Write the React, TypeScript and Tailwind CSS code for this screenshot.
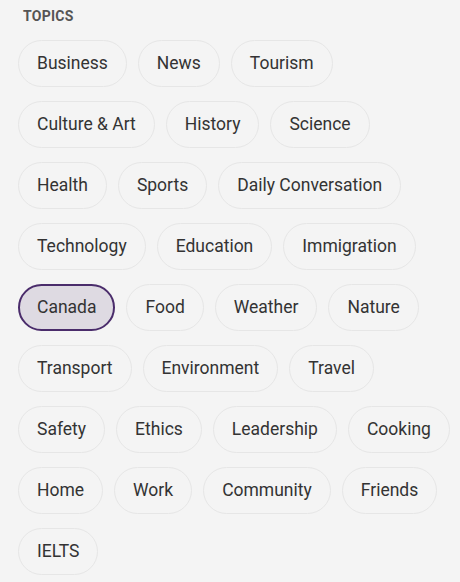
import React from 'react';

const TOPICS = [
  'Business', 'News', 'Tourism', 'Culture & Art', 'History', 'Science',
  'Health', 'Sports', 'Daily Conversation', 'Technology', 'Education', 'Immigration',
  'Canada', 'Food', 'Weather', 'Nature', 'Transport', 'Environment', 'Travel',
  'Safety', 'Ethics', 'Leadership', 'Cooking', 'Home', 'Work', 'Community', 'Friends', 'IELTS',
];

export default function App() {
  const selected = 'Canada';

  return (
    <div
      className="min-h-[582px] w-[460px] bg-[#f4f4f4] pl-[18px] pr-[8px] pt-[8px]"
      style={{ fontFamily: 'Roboto, "Noto Sans", sans-serif' }}
    >
      <h3 className="pl-[5px] text-[14px] font-bold tracking-[0.02em] text-[#555] leading-[16px]">TOPICS</h3>
      <div className="mt-[16px] flex flex-wrap gap-x-[11px] gap-y-[14px]">
        {TOPICS.map((topic) => {
          const active = topic === selected;
          return (
            <button
              key={topic}
              className={
                active
                  ? 'h-[47px] rounded-full border-2 border-[#4a2c6b] bg-[#dedae2] px-[17px] text-[17.5px] text-[#333]'
                  : 'h-[47px] rounded-full border-[1.5px] border-[#e6e6e6] bg-[#f4f4f4] px-[18px] text-[17.5px] text-[#333]'
              }
            >
              {topic}
            </button>
          );
        })}
      </div>
    </div>
  );
}
